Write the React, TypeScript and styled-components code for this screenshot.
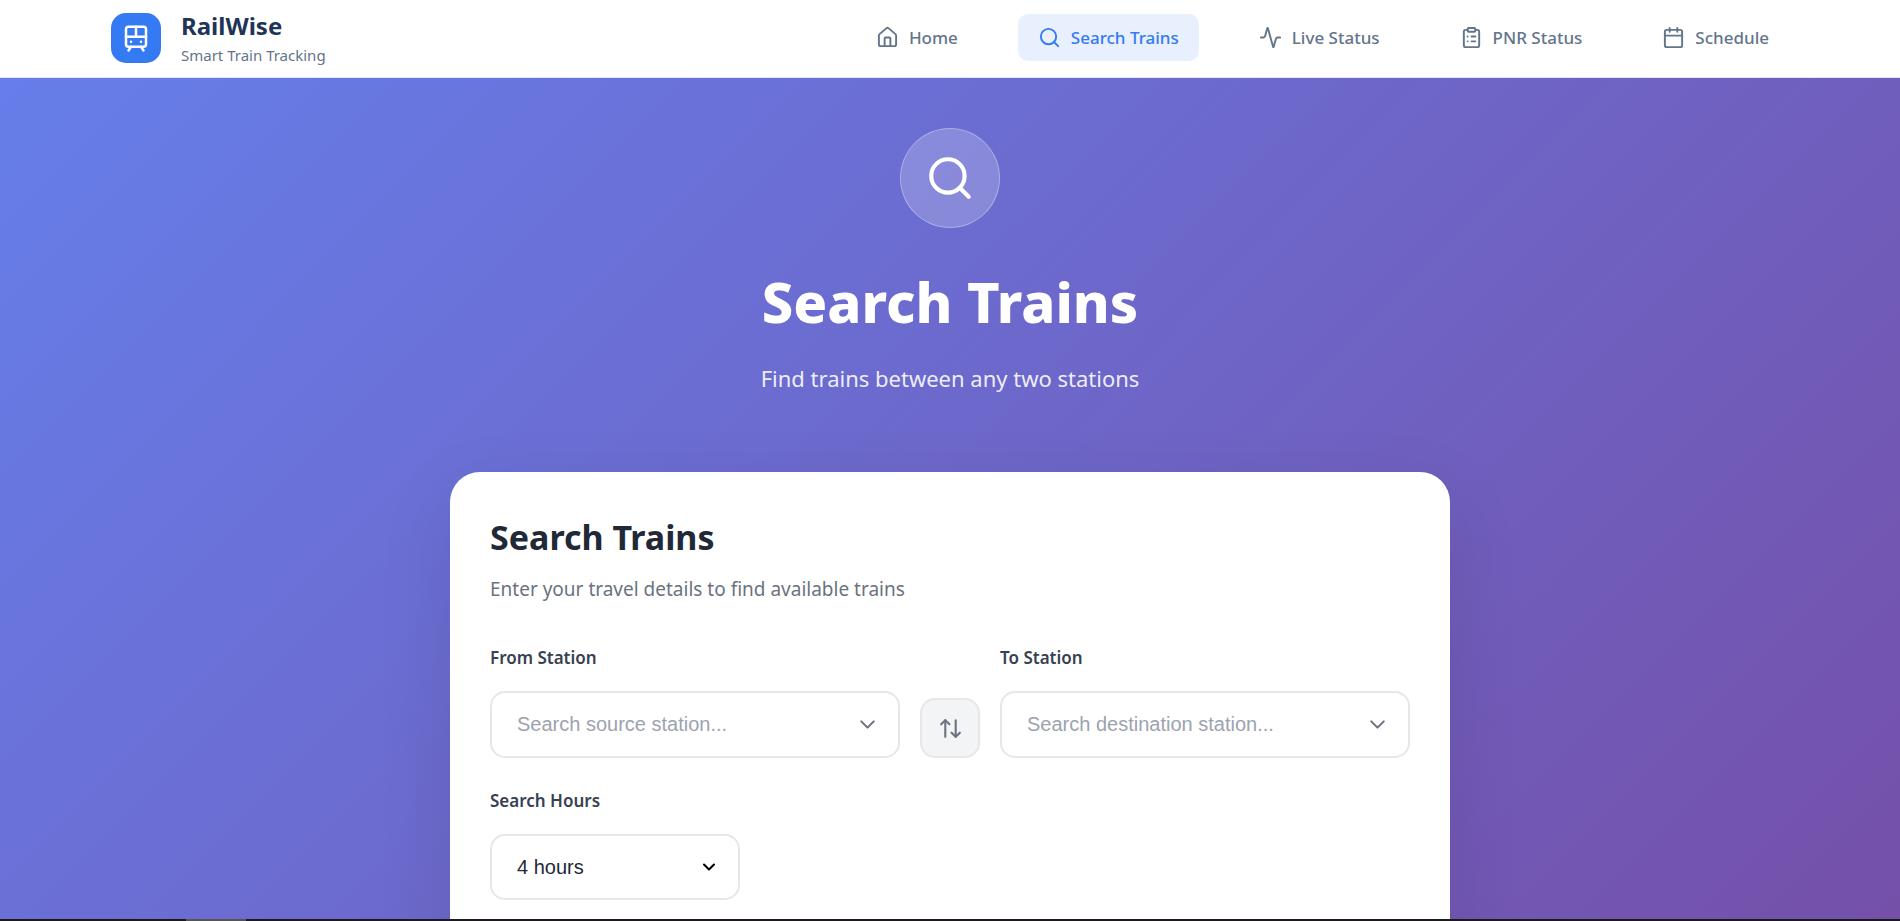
import React, { useState } from "react";
import styled, { createGlobalStyle } from "styled-components";
import {
  Activity,
  ArrowUpDown,
  Calendar,
  ChevronDown,
  ClipboardList,
  House,
  Search,
  TramFront,
  type LucideIcon,
} from "lucide-react";

const GlobalStyle = createGlobalStyle`
  *, *::before, *::after { box-sizing: border-box; }
  body {
    margin: 0;
    font-family: "Noto Sans", "Open Sans", sans-serif;
    color: #1f2937;
  }
  h1, h2, p { margin: 0; }
`;

const Shell = styled.div`
  display: flex;
  flex-direction: column;
  height: 100vh;
`;

const Header = styled.header`
  flex: none;
  padding: 0 20px 1px;
  background: #ffffff;
  border-bottom: 1px solid #e2e8f0;
`;

const HeaderInner = styled.div`
  display: flex;
  align-items: center;
  justify-content: space-between;
  max-width: 1678px;
  min-height: 76px;
  margin: 0 auto;
`;

const Brand = styled.a`
  display: flex;
  align-items: center;
  gap: 20px;
  text-decoration: none;
`;

const BrandMark = styled.span`
  display: flex;
  align-items: center;
  justify-content: center;
  width: 50px;
  height: 50px;
  border-radius: 15px;
  background: #347af3;
  color: #ffffff;
`;

const BrandText = styled.span`
  display: flex;
  flex-direction: column;
  gap: 3px;
  padding-top: 1px;
`;

const BrandName = styled.span`
  font-size: 24px;
  font-weight: 700;
  line-height: 30px;
  color: #1e3557;
`;

const BrandTagline = styled.span`
  font-size: 15px;
  line-height: 22px;
  color: #64748b;
`;

const Nav = styled.nav`
  display: flex;
  gap: 40px;
  margin-bottom: 2px;
`;

const NavLink = styled.a<{ $active?: boolean }>`
  display: flex;
  align-items: center;
  gap: 10px;
  height: 47px;
  padding: 0 20px;
  border-radius: 10px;
  font-size: 17px;
  font-weight: 500;
  text-decoration: none;
  color: ${(p) => (p.$active ? "#347af3" : "#64748b")};
  background: ${(p) => (p.$active ? "#e8f0fe" : "transparent")};
`;

const Main = styled.main`
  flex: 1;
  min-height: 0;
  overflow-y: auto;
  scrollbar-width: none;
`;

const Backdrop = styled.div`
  padding: 50px 20px 80px;
  background: linear-gradient(135deg, #667eea 0%, #764ba2 100%);
`;

const Hero = styled.section`
  display: flex;
  flex-direction: column;
  align-items: center;
  margin-bottom: 76px;
  text-align: center;
`;

const HeroIcon = styled.div`
  display: flex;
  align-items: center;
  justify-content: center;
  width: 100px;
  height: 100px;
  margin-bottom: 37px;
  border: 1px solid rgba(255, 255, 255, 0.3);
  border-radius: 50%;
  background: rgba(255, 255, 255, 0.2);
  color: #ffffff;
`;

const HeroTitle = styled.h1`
  margin-bottom: 23px;
  font-size: 56px;
  font-weight: 800;
  line-height: 72px;
  color: #ffffff;
`;

const HeroSubtitle = styled.p`
  font-size: 22px;
  line-height: 36px;
  color: rgba(255, 255, 255, 0.9);
`;

const Card = styled.form`
  max-width: 1000px;
  margin: 0 auto;
  padding: 40px 40px 240px;
  border-radius: 30px;
  background: #ffffff;
  box-shadow: 0 25px 75px rgba(0, 0, 0, 0.1);
`;

const CardTitle = styled.h2`
  margin-bottom: 11px;
  font-size: 34px;
  font-weight: 700;
  line-height: 50px;
`;

const CardSubtitle = styled.p`
  margin-bottom: 40px;
  font-size: 19px;
  line-height: 32px;
  color: #6b7280;
`;

const StationRow = styled.div`
  display: grid;
  grid-template-columns: 1fr 60px 1fr;
  align-items: end;
  gap: 20px;
  margin-bottom: 30px;
`;

const Field = styled.div<{ $width?: number }>`
  display: flex;
  flex-direction: column;
  gap: 20px;
  min-width: 0;
  max-width: ${(p) => (p.$width ? `${p.$width}px` : "none")};
`;

const Label = styled.label`
  font-size: 17px;
  font-weight: 600;
  line-height: 26px;
  color: #374151;
`;

const Control = styled.div<{ $right: number; $color: string }>`
  position: relative;
  display: flex;
  align-items: center;

  svg {
    position: absolute;
    right: ${(p) => p.$right}px;
    color: ${(p) => p.$color};
    pointer-events: none;
  }
`;

const controlStyle = `
  width: 100%;
  border: 2px solid #e5e7eb;
  border-radius: 15px;
  background: #ffffff;
  font-family: "Liberation Sans", Arial, sans-serif;
  font-size: 20px;
  color: #1f2937;
  outline: none;
  &:focus { border-color: #347af3; }
`;

const StationInput = styled.input`
  ${controlStyle}
  height: 67px;
  padding: 0 60px 0 25px;

  &::placeholder {
    color: #9ca3af;
    opacity: 1;
  }
`;

const HoursSelect = styled.select`
  ${controlStyle}
  height: 66px;
  padding: 0 50px 0 25px;
  appearance: none;
`;

const SwapButton = styled.button`
  display: flex;
  align-items: center;
  justify-content: center;
  width: 60px;
  height: 60px;
  padding: 0;
  border: 2px solid #e5e7eb;
  border-radius: 15px;
  background: #f3f4f6;
  color: #6b7280;
  cursor: pointer;
`;

const BottomStrip = styled.footer`
  flex: none;
  height: 2px;
  padding-left: 186px;
  background: #1c1a1c;
`;

const StripHandle = styled.div`
  width: 60px;
  height: 2px;
  background: #555555;
`;

const links: { label: string; icon: LucideIcon; active?: boolean }[] = [
  { label: "Home", icon: House },
  { label: "Search Trains", icon: Search, active: true },
  { label: "Live Status", icon: Activity },
  { label: "PNR Status", icon: ClipboardList },
  { label: "Schedule", icon: Calendar },
];

export default function App() {
  const [from, setFrom] = useState("");
  const [to, setTo] = useState("");

  const swap = () => {
    setFrom(to);
    setTo(from);
  };

  return (
    <Shell>
      <GlobalStyle />
      <Header>
        <HeaderInner>
          <Brand href="#">
            <BrandMark>
              <TramFront size={30} />
            </BrandMark>
            <BrandText>
              <BrandName>RailWise</BrandName>
              <BrandTagline>Smart Train Tracking</BrandTagline>
            </BrandText>
          </Brand>
          <Nav>
            {links.map(({ label, icon: Icon, active }) => (
              <NavLink key={label} href="#" $active={active} aria-current={active ? "page" : undefined}>
                <Icon size={23} />
                {label}
              </NavLink>
            ))}
          </Nav>
        </HeaderInner>
      </Header>
      <Main>
        <Backdrop>
          <Hero>
            <HeroIcon>
              <Search size={50} />
            </HeroIcon>
            <HeroTitle>Search Trains</HeroTitle>
            <HeroSubtitle>Find trains between any two stations</HeroSubtitle>
          </Hero>
          <Card onSubmit={(e) => e.preventDefault()}>
            <CardTitle>Search Trains</CardTitle>
            <CardSubtitle>Enter your travel details to find available trains</CardSubtitle>
            <StationRow>
              <Field>
                <Label htmlFor="from">From Station</Label>
                <Control $right={20} $color="#6b7280">
                  <StationInput
                    id="from"
                    placeholder="Search source station..."
                    value={from}
                    onChange={(e) => setFrom(e.target.value)}
                  />
                  <ChevronDown size={25} />
                </Control>
              </Field>
              <SwapButton type="button" aria-label="Swap stations" onClick={swap}>
                <ArrowUpDown size={25} />
              </SwapButton>
              <Field>
                <Label htmlFor="to">To Station</Label>
                <Control $right={20} $color="#6b7280">
                  <StationInput
                    id="to"
                    placeholder="Search destination station..."
                    value={to}
                    onChange={(e) => setTo(e.target.value)}
                  />
                  <ChevronDown size={25} />
                </Control>
              </Field>
            </StationRow>
            <Field $width={250}>
              <Label htmlFor="hours">Search Hours</Label>
              <Control $right={21} $color="#000000">
                <HoursSelect id="hours" defaultValue="4">
                  <option value="2">2 hours</option>
                  <option value="4">4 hours</option>
                  <option value="8">8 hours</option>
                </HoursSelect>
                <ChevronDown size={20} strokeWidth={2.5} />
              </Control>
            </Field>
          </Card>
        </Backdrop>
      </Main>
      <BottomStrip>
        <StripHandle />
      </BottomStrip>
    </Shell>
  );
}
